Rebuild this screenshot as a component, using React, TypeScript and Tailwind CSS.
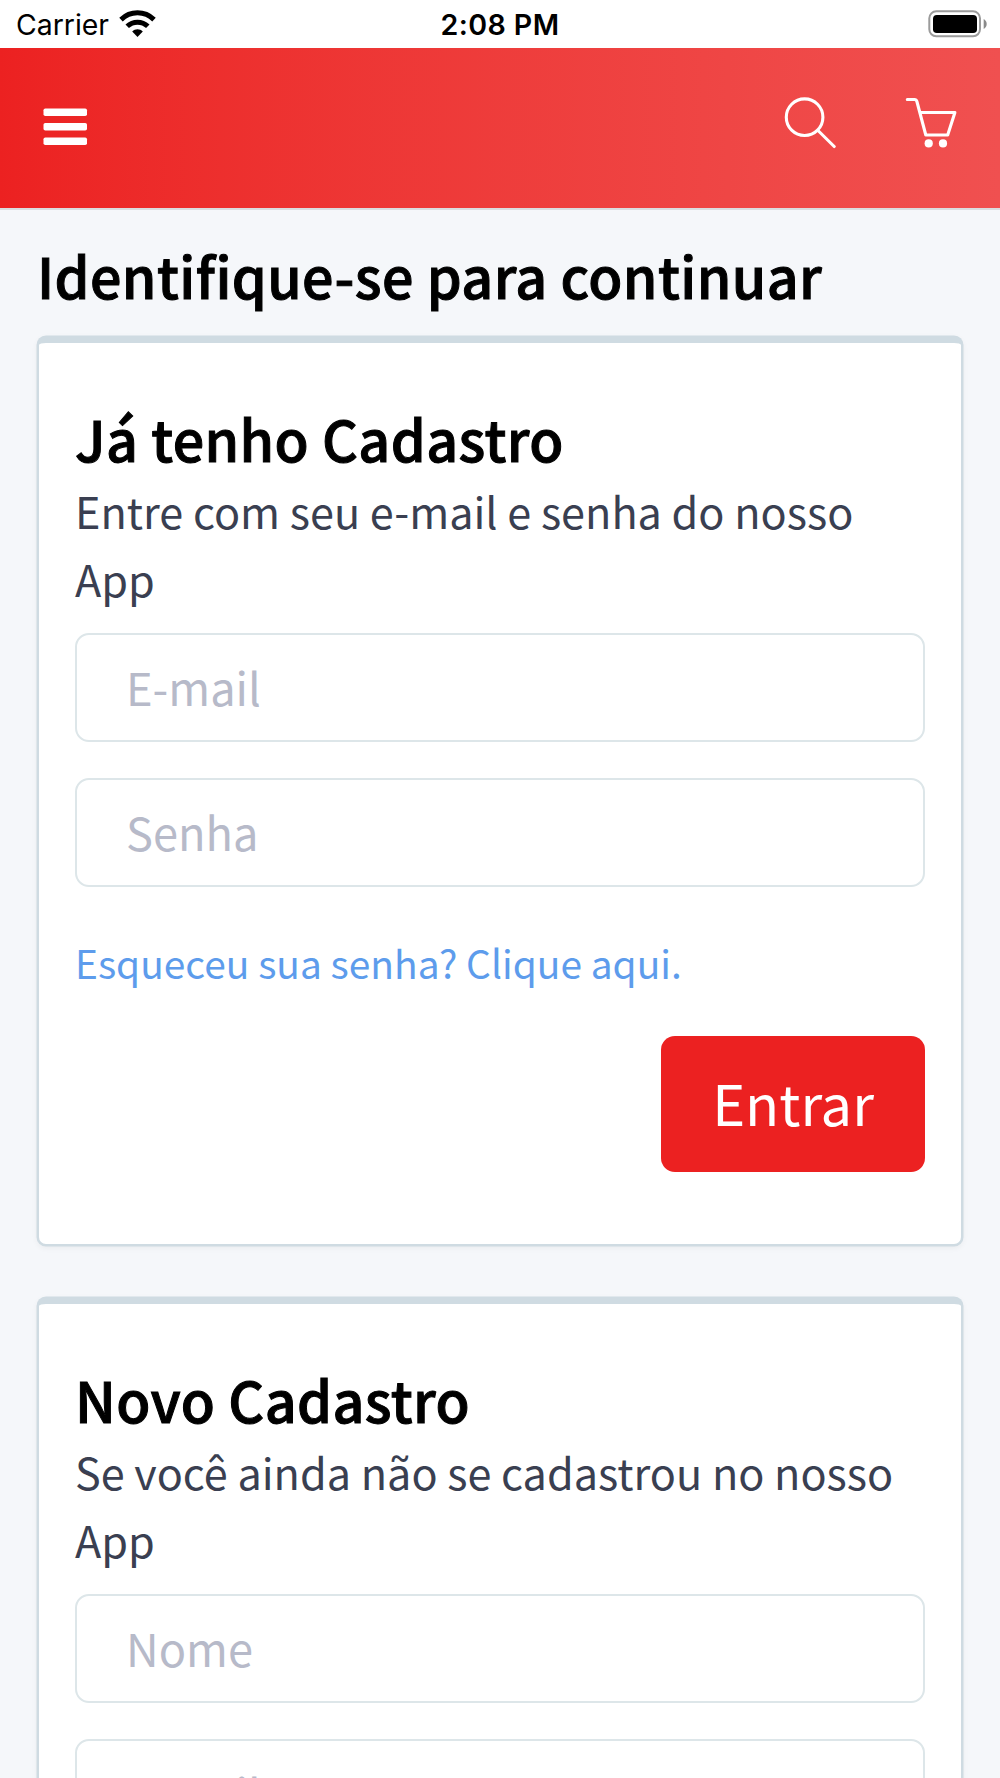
import React from 'react';

interface FieldProps {
  label: string;
  type?: string;
}

const Field: React.FC<FieldProps> = ({ label, type = 'text' }) => (
  <input
    type={type}
    placeholder={label}
    aria-label={label}
    className="block h-[109px] w-full rounded-[14px] border-2 border-[#dde6e9] bg-white px-[49px] pb-0.5 text-[45.2px] text-[#3a3f51] outline-none placeholder:text-[#b7bac9] placeholder:opacity-100"
  />
);

interface CardProps {
  title: string;
  text: string;
  children: React.ReactNode;
}

const Card: React.FC<CardProps> = ({ title, text, children }) => (
  <section className="rounded-[9px] border-2 border-t-[7px] border-[#cfdbe2] bg-white px-9 pt-[56.5px] pb-[72px] shadow-[0_0_0_0.5px_#cfdbe2,0_2px_6px_rgba(0,0,0,0.05)]">
    <h2 className="text-[55.6px] leading-[76px] font-medium tracking-[0.4px] text-black [-webkit-text-stroke:1px_#000]">{title}</h2>
    <p className="mb-[21.5px] text-[43.2px] leading-[68px] text-[#3a3f51]">{text}</p>
    {children}
  </section>
);

const StatusBar = () => (
  <div className="grid h-12 grid-cols-3 items-center bg-white pr-[13px] pl-4 font-[Inter,sans-serif] text-black">
    <div className="flex items-center gap-2.5">
      <span className="pt-0.5 text-[28.4px] leading-none">Carrier</span>
      <svg width="37" height="28" viewBox="0 0 37 28" fill="none" stroke="currentColor" strokeWidth="5">
        <path d="M2 9.6C11.3 .6 25.7 .6 35 9.6" />
        <path d="M8.2 16.3C14 10.8 23 10.8 28.8 16.3" />
        <path d="M13.2 21.4C16.2 18.4 20.8 18.4 23.8 21.4L18.5 26.9Z" fill="currentColor" stroke="none" />
      </svg>
    </div>
    <span className="pt-0.5 pr-[3px] text-center text-[28.6px] leading-none font-semibold tracking-[0.4px]">2:08 PM</span>
    <svg className="justify-self-end" width="59" height="28" viewBox="0 0 59 28">
      <rect x="1.3" y="1.3" width="50.7" height="25" rx="7" fill="none" stroke="#9b9b9b" strokeWidth="2" />
      <rect x="5" y="5" width="44" height="18" rx="3.8" fill="#000" />
      <path d="M55.7 9v10c2-1.2 3-3 3-5s-1-3.8-3-5Z" fill="#8a8a8a" />
    </svg>
  </div>
);

const Header = () => (
  <header className="flex h-[162px] items-start justify-between border-b-2 border-[#dadde0] bg-gradient-to-r from-[#ec2121] to-[#f05050] bg-origin-border px-[43px]">
    <button aria-label="Menu" className="mt-[60px]">
      <svg width="45" height="38" viewBox="0 0 45 38" fill="#fff">
        <rect x="0.5" y="0.4" width="43.5" height="7.7" rx="1.8" />
        <rect x="0.5" y="14.9" width="43.5" height="7.7" rx="1.8" />
        <rect x="0.5" y="29.4" width="43.5" height="7.7" rx="1.8" />
      </svg>
    </button>
    <div className="mt-[48px] flex gap-[69px] text-white">
      <button aria-label="Buscar">
        <svg width="52" height="54" viewBox="784 96 52 54" fill="none" stroke="currentColor" strokeWidth="3.1" strokeLinecap="round">
          <circle cx="804.6" cy="117.2" r="18.3" />
          <path d="M818 130.5L834.2 146.5" />
        </svg>
      </button>
      <button aria-label="Carrinho">
        <svg width="52" height="54" viewBox="905 96 52 54" fill="none" stroke="currentColor" strokeWidth="3.1" strokeLinecap="round" strokeLinejoin="round">
          <path d="M907.3 99.5H914.5Q916.3 99.5 916.9 101.5L925.8 135H947.7L954.9 112.5H920.3" />
          <circle cx="928.7" cy="143.4" r="4.1" fill="currentColor" stroke="none" />
          <circle cx="943" cy="143.4" r="4.1" fill="currentColor" stroke="none" />
        </svg>
      </button>
    </div>
  </header>
);

export default function App() {
  return (
    <div className="h-[1778px] w-[1000px] overflow-hidden bg-[#f5f7fa] font-['Noto_Sans_CJK_SC','Noto_Sans_CJK_JP',sans-serif]">
      <StatusBar />
      <Header />
      <main className="px-[37px] pt-[23px]">
        <h1 className="mb-[19px] text-[55.6px] leading-[84px] font-medium tracking-[0.4px] text-black [-webkit-text-stroke:1px_#000]">
          Identifique-se para continuar
        </h1>
        <div className="flex flex-col gap-[51px]">
          <Card title="Já tenho Cadastro" text="Entre com seu e-mail e senha do nosso App">
            <div className="flex flex-col gap-9">
              <Field label="E-mail" type="email" />
              <Field label="Senha" type="password" />
            </div>
            <a href="#" className="mt-[45px] mb-[44px] block text-[38.9px] leading-[60px] text-[#5d9cec]">
              Esqueceu sua senha? Clique aqui.
            </a>
            <button className="ml-auto block h-[136px] w-[264px] rounded-[14px] bg-[#ec2121] pb-[5px] text-[56px] leading-none text-white">
              Entrar
            </button>
          </Card>
          <Card title="Novo Cadastro" text="Se você ainda não se cadastrou no nosso App">
            <div className="flex flex-col gap-9">
              <Field label="Nome" />
              <Field label="E-mail" type="email" />
            </div>
          </Card>
        </div>
      </main>
    </div>
  );
}
